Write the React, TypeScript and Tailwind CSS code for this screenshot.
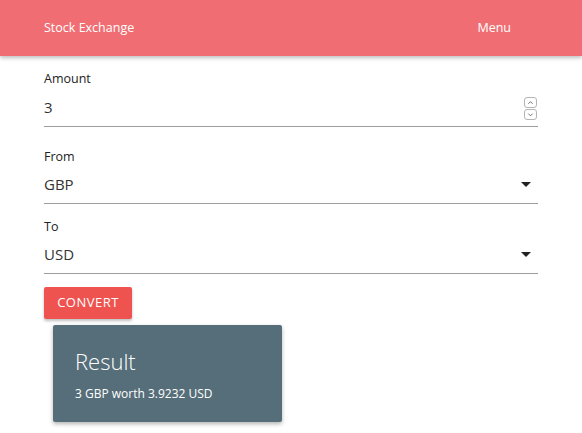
// Currency converter page: navbar, three fields, convert button and result card.

const UI_FONT = { fontFamily: '"Open Sans", "Noto Sans", sans-serif' }

function Spinner() {
  return (
    <div className="flex flex-col gap-[1px] mt-[2px]">
      {['M4 7 L6.5 4.5 L9 7', 'M4 4.5 L6.5 7 L9 4.5'].map(d => (
        <div key={d} className="w-[13px] h-[11px] rounded-[3px] border border-[#b5b5b5] bg-white flex items-center justify-center">
          <svg width="13" height="11" viewBox="0 0 13 11">
            <path d={d} fill="none" stroke="#555" strokeWidth="1" />
          </svg>
        </div>
      ))}
    </div>
  )
}

function Caret() {
  return (
    <svg width="10" height="6" viewBox="0 0 10 6">
      <path d="M0 0 L10 0 L5 5 Z" fill="#222" />
    </svg>
  )
}

function Field({ label, value, kind, className = '' }: { label: string; value: string; kind: 'number' | 'select'; className?: string }) {
  return (
    <div className={`flex flex-col ${className}`}>
      <span className="text-[12.5px] leading-[18px] text-[#222]">{label}</span>
      <div className={`h-[38px] ${kind === 'number' ? 'mt-[1px]' : 'mt-0'} flex items-center justify-between border-b border-[#9e9e9e] pr-[1px]`}>
        <span className="text-[15px] text-[#333]">{value}</span>
        {kind === 'number' ? <Spinner /> : <span className="pr-[6px]"><Caret /></span>}
      </div>
    </div>
  )
}

export default function App() {
  return (
    <div className="min-h-[433px] bg-white" style={UI_FONT}>

      {/* Navbar */}
      <nav className="h-14 bg-[#f06e73] shadow-[0_2px_4px_rgba(0,0,0,0.25)] flex items-center justify-between pl-[44px] pr-[71px] text-white text-[12.5px]">
        <span>Stock Exchange</span>
        <span>Menu</span>
      </nav>

      <div className="px-[44px] pt-[14px] flex flex-col">
        <Field label="Amount" value="3" kind="number" />
        <Field label="From" value="GBP" kind="select" className="mt-[21px]" />
        <Field label="To" value="USD" kind="select" className="mt-[14px]" />
      </div>

      <div className="px-[44px] pt-[13px]">
        <button className="h-8 w-[88px] bg-[#ef5350] text-white text-[13px] tracking-[0.5px] rounded-[2px] shadow-[0_2px_3px_rgba(0,0,0,0.25)]">
          CONVERT
        </button>
      </div>

      {/* Result card */}
      <div className="ml-[53px] mt-[6px] w-[229px] h-[97px] bg-[#566e79] rounded-[2px] shadow-[0_2px_4px_rgba(0,0,0,0.3)] px-[22px] pt-[22px] text-white">
        <div className="text-[22px] font-light leading-[28px]">Result</div>
        <div className="text-[12px] mt-[10px]">3 GBP worth 3.9232 USD</div>
      </div>
    </div>
  )
}
